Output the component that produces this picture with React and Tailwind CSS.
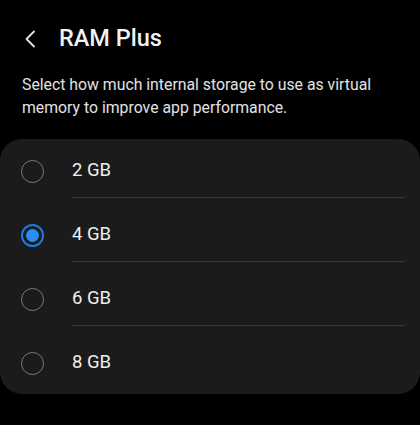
import { useState } from "react";

const options = ["2 GB", "4 GB", "6 GB", "8 GB"];

const App = () => {
  const [selected, setSelected] = useState("4 GB");

  return (
    <div className="w-[420px] h-[425px] bg-black text-[#ededed] overflow-hidden" style={{ fontFamily: "Roboto, 'Noto Sans', sans-serif" }}>
      {/* Header */}
      <div className="flex items-center h-[38px] mt-[20px]">
        <button className="ml-[20px] w-[18px] h-[20px] flex items-center justify-center">
          <svg width="13" height="18" viewBox="0 0 13 18" fill="none">
            <path d="M11 1.5 L3.5 9 L11 16.5" stroke="#e6e6e6" strokeWidth="1.8" strokeLinecap="round" strokeLinejoin="round" />
          </svg>
        </button>
        <h1 className="ml-[21px] text-[23.5px] font-medium text-[#f2f2f2]">RAM Plus</h1>
      </div>

      {/* Description */}
      <p className="mt-[15px] px-[22px] text-[15.8px] leading-[23px] text-[#e2e2e2]">
        Select how much internal storage to use as virtual memory to improve app performance.
      </p>

      {/* Options card */}
      <div className="mt-[20px] bg-[#1b1b1b] rounded-[22px] pt-[6px] pb-[5px]">
        {options.map((opt, i) => (
          <div key={opt} className={i === 0 ? "" : "mt-[11px]"}>
            <button
              onClick={() => setSelected(opt)}
              className="w-full flex items-center h-[52px] text-left"
            >
              <span className="ml-[21px] w-[23px] h-[23px] shrink-0 flex items-center justify-center">
                {selected === opt ? (
                  <span className="w-[23px] h-[23px] rounded-full border-[2px] border-[#1d7be0] flex items-center justify-center">
                    <span className="w-[13px] h-[13px] rounded-full bg-[#2a8ef5]" />
                  </span>
                ) : (
                  <span className="w-[23px] h-[23px] rounded-full border-[1.5px] border-[#7a7a7a]" />
                )}
              </span>
              <span className="ml-[28px] text-[18.5px] text-[#efefef]">{opt}</span>
            </button>
            {i < options.length - 1 && <div className="ml-[72px] mr-[15px] h-px bg-[#363636]" />}
          </div>
        ))}
      </div>
    </div>
  );
};

export default App;
